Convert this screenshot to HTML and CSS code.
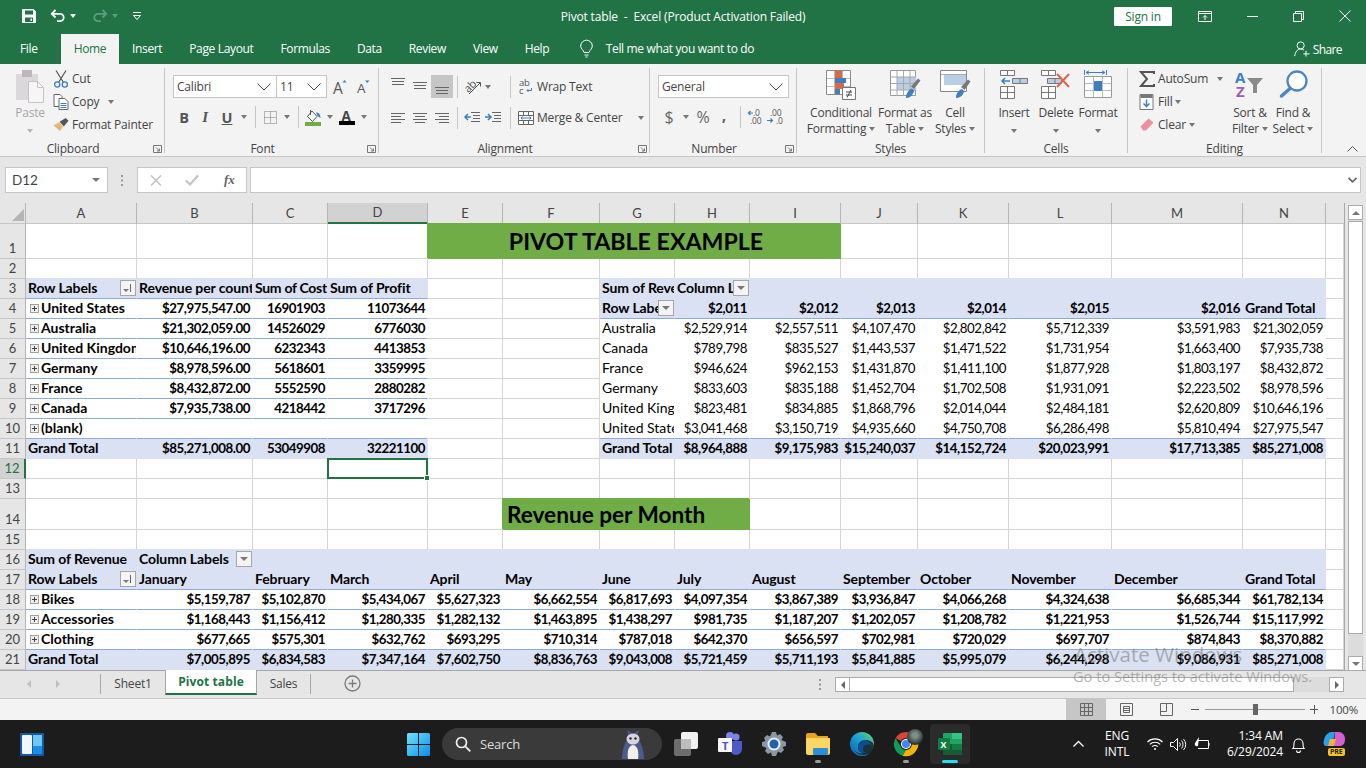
FILE: index.html
```html
<!DOCTYPE html>
<html lang="en">
<head>
  <meta charset="UTF-8">
  <title>Pivot table - Excel</title>
  <link rel="stylesheet" href="styles.css">
</head>
<body>

  <!-- Title bar -->
  <header class="titlebar">
    <div class="qat">
      <svg class="qat-save" width="16" height="16" viewBox="0 0 16 16"><path fill="#fff" fill-rule="evenodd" d="M1 1h11.5L15 3.5V15H1zM4 2.5v4h8v-4zM4 9.5V14h8V9.5zM9.5 10.5H11V13H9.5z"/></svg>
      <svg class="qat-undo" width="16" height="14" viewBox="0 0 16 14"><path fill="none" stroke="#fff" stroke-width="1.8" d="M5.5 1 1.8 4.8l3.7 3.7M2 4.8h8a3.6 3.6 0 0 1 0 7.4H7"/></svg>
      <span class="caret caret-white"></span>
      <svg class="qat-redo" width="16" height="14" viewBox="0 0 16 14"><path fill="none" stroke="#5f9c7d" stroke-width="1.8" d="M10.5 1l3.7 3.8-3.7 3.7M14 4.8H6a3.6 3.6 0 0 0 0 7.4h3"/></svg>
      <span class="caret caret-dim"></span>
      <svg class="qat-more" width="10" height="9" viewBox="0 0 10 9"><path fill="none" stroke="#fff" d="M1 .5h8M1.5 3.5l3.5 4 3.5-4z"/></svg>
    </div>
    <div class="doc-title">Pivot table&nbsp; -&nbsp; Excel (Product Activation Failed)</div>
    <div class="win-ctrls">
      <span class="signin">Sign in</span>
      <svg class="ctl-box" width="14" height="11" viewBox="0 0 14 11"><path fill="none" stroke="#fff" d="M.5.5h13v10H.5zM.5 2.5h13M7 9V4.5M5 6.5l2-2 2 2"/></svg>
      <svg class="ctl-min" width="11" height="1" viewBox="0 0 11 1"><path stroke="#fff" d="M0 .5h11"/></svg>
      <svg class="ctl-restore" width="11" height="11" viewBox="0 0 11 11"><path fill="none" stroke="#fff" d="M.5 2.5h8v8h-8zM2.5 2.5v-2h8v8h-2"/></svg>
      <svg class="ctl-close" width="12" height="12" viewBox="0 0 12 12"><path stroke="#fff" d="M.5.5l11 11M11.5.5l-11 11"/></svg>
    </div>
  </header>

  <!-- Ribbon tabs -->
  <nav class="tabs">
    <span class="tab tab-file">File</span>
    <span class="tab tab-active">Home</span>
    <span class="tab">Insert</span>
    <span class="tab">Page Layout</span>
    <span class="tab">Formulas</span>
    <span class="tab">Data</span>
    <span class="tab">Review</span>
    <span class="tab">View</span>
    <span class="tab">Help</span>
    <svg class="bulb" width="13" height="18" viewBox="0 0 13 18"><path fill="none" stroke="#fff" d="M4 12.5C3.500 10 .7 9 .7 6a5.800 5.800 0 0 1 11.600 0c0 3-2.800 4-3.300 6.500zM4.500 15h4M5.500 17h2"/></svg>
    <span class="tell">Tell me what you want to do</span>
    <span class="share">
      <svg width="16" height="16" viewBox="0 0 18 18"><path fill="none" stroke="#fff" stroke-width="1.100" d="M7.500 1a4 4 0 0 1 0 8 4 4 0 0 1 0-8zM.8 17c.5-4.500 3-8 6.700-8 1.500 0 2.800.5 3.800 1.300M13.500 11v6.500M10.500 14.500h7"/></svg>
      Share
    </span>
  </nav>

  <!-- Ribbon -->
  <section class="ribbon">

    <div class="group g-clipboard">
      <div class="group-main">
        <div class="bigbtn paste">
          <span class="bigicon">
            <svg width="30" height="33" viewBox="0 0 30 33"><rect x="1" y="4" width="22" height="26" fill="#dbd8db"/><rect x="7" y="0" width="10" height="7" fill="#bcb8bc"/><path fill="#f7f6f7" stroke="#c6c2c6" d="M13.500 11.500h9l6 6v15h-15z"/><path fill="none" stroke="#c6c2c6" d="M22.500 11.500v6h6"/></svg>
          </span>
          <span class="bigtext dim">Paste</span>
          <span class="bigtext"><span class="caret caret-dim2"></span></span>
        </div>
        <div class="stack">
          <div class="stack-row">
            <svg width="15" height="18" viewBox="0 0 15 18"><path fill="none" stroke="#555" stroke-width="1.200" d="M2.500.5l7.500 12M12.500.5L5 12.500"/><circle cx="3.700" cy="14.500" r="2.600" fill="none" stroke="#3c7fc0" stroke-width="1.300"/><circle cx="11.300" cy="14.500" r="2.600" fill="none" stroke="#3c7fc0" stroke-width="1.300"/></svg>
            <span>Cut</span>
          </div>
          <div class="stack-row">
            <svg width="15" height="16" viewBox="0 0 15 16"><path fill="#fff" stroke="#666" d="M.5.5h6l2 2v10h-8z"/><path fill="#fff" stroke="#666" d="M5.500 4.500h6l3 3v8h-9z"/><path stroke="#3c7fc0" d="M7 9.500h6M7 11.500h6M7 13.500h6"/></svg>
            <span>Copy</span><span class="caret caret-copy"></span>
          </div>
          <div class="stack-row">
            <svg width="17" height="15" viewBox="0 0 17 15"><path fill="#e3b873" d="M.5 8.500L6.500 5l4 5-3 4.500z"/><path fill="#555" d="M7 4.500L13.500.5l3 3-5 6z"/></svg>
            <span>Format Painter</span>
          </div>
        </div>
      </div>
      <div class="group-label"><span>Clipboard</span><svg class="launcher" width="9" height="8" viewBox="0 0 9 8"><path fill="none" stroke="#777" d="M.5 7.500V.5h8v7zM3 2.500l3.500 3.500M6.500 3.500V6H4"/></svg></div>
    </div>

    <div class="group g-font">
      <div class="group-main font-main">
        <div class="font-row1">
          <span class="combo combo-font"><span>Calibri</span><svg width="14" height="8" viewBox="0 0 14 8"><path fill="none" stroke="#444" d="M.5.5L7 7l6.500-6.500"/></svg></span>
          <span class="combo combo-size"><span>11</span><svg width="14" height="8" viewBox="0 0 14 8"><path fill="none" stroke="#444" d="M.5.5L7 7l6.500-6.500"/></svg></span>
          <svg class="grow" width="15" height="16" viewBox="0 0 15 16"><text x="0" y="15" class="ico-a">A</text><path fill="#3c7fc0" d="M9.500 3.500L11.500 1l2 2.500z"/></svg>
          <svg class="shrink" width="13" height="14" viewBox="0 0 13 14"><text x="0" y="13" class="ico-a2">A</text><path fill="#3c7fc0" d="M8 .5h4.500l-2.200 2.500z"/></svg>
        </div>
        <div class="font-row2">
          <span class="fmt fmt-b">B</span>
          <span class="fmt fmt-i">I</span>
          <span class="fmt fmt-u">U</span>
          <span class="caret"></span>
          <span class="vsep"></span>
          <svg width="13" height="13" viewBox="0 0 13 13"><path fill="none" stroke="#777" stroke-dasharray="1 1" d="M.5.500h12v12H.5zM6.500.500v12M.5 6.500h12"/></svg>
          <span class="caret"></span>
          <span class="vsep"></span>
          <svg width="16" height="17" viewBox="0 0 16 17"><path fill="#fff" stroke="#555" d="M2.500 7.500L7 2l5 5.500-4.500 5z"/><path fill="none" stroke="#555" d="M5.500 1v5"/><path fill="#3c7fc0" d="M11 3.500c3 0 4.500 2 4.500 5.500L12.500 7z"/><rect y="13" width="16" height="4" fill="#70ad47"/></svg>
          <span class="caret"></span>
          <svg width="16" height="16" viewBox="0 0 16 16"><text x="2.500" y="11.500" class="ico-color">A</text><rect y="12" width="16" height="4" fill="#000"/></svg>
          <span class="caret"></span>
        </div>
      </div>
      <div class="group-label"><span>Font</span><svg class="launcher" width="9" height="8" viewBox="0 0 9 8"><path fill="none" stroke="#777" d="M.5 7.500V.5h8v7zM3 2.500l3.500 3.500M6.500 3.500V6H4"/></svg></div>
    </div>

    <div class="group g-align">
      <div class="group-main font-main">
        <div class="align-row1">
          <span class="alb alb-top"><svg width="14" height="7" viewBox="0 0 14 7"><path stroke="#666" d="M0 .5h14M1 3.500h12M1 6.500h12"/></svg></span>
          <span class="alb alb-mid"><svg width="14" height="7" viewBox="0 0 14 7"><path stroke="#666" d="M0 .5h14M1 3.500h12M1 6.500h12"/></svg></span>
          <span class="alb alb-on"><svg width="14" height="7" viewBox="0 0 14 7"><path stroke="#666" d="M0 .5h14M1 3.500h12M1 6.500h12"/></svg></span>
          <span class="vsep"></span>
          <svg width="18" height="16" viewBox="0 0 18 16"><text x="1" y="12" class="ico-ab" transform="rotate(-45 6 8)">ab</text><path fill="none" stroke="#555" d="M6 15L17 4M13.500 3.500H17.500V7.500"/></svg>
          <span class="caret"></span>
          <span class="vsep vsep-far"></span>
          <svg width="14" height="16" viewBox="0 0 14 16"><text x="0" y="7" class="ico-wrap">ab</text><text x="0" y="15" class="ico-wrap">c</text><path fill="none" stroke="#3c7fc0" d="M12.500 9v2.500h-4.500M9.500 10l-1.500 1.500 1.500 1.500"/></svg>
          <span class="rb-text">Wrap Text</span>
        </div>
        <div class="align-row2">
          <span class="alb"><svg width="14" height="10" viewBox="0 0 14 10"><path stroke="#666" d="M0 .5h14M0 3.500h10M0 6.500h14M0 9.500h10"/></svg></span>
          <span class="alb"><svg width="14" height="10" viewBox="0 0 14 10"><path stroke="#666" d="M0 .5h14M2 3.500h10M0 6.500h14M2 9.500h10"/></svg></span>
          <span class="alb"><svg width="14" height="10" viewBox="0 0 14 10"><path stroke="#666" d="M0 .5h14M4 3.500h10M0 6.500h14M4 9.500h10"/></svg></span>
          <span class="vsep"></span>
          <svg width="16" height="11" viewBox="0 0 16 11"><path stroke="#666" d="M7 .5h9M9 3.500h7M9 6.500h7M7 9.500h9"/><path fill="none" stroke="#3c7fc0" stroke-width="1.500" d="M7 5H1M4 2L1 5l3 3"/></svg>
          <svg width="16" height="11" viewBox="0 0 16 11"><path stroke="#666" d="M7 .5h9M9 3.500h7M9 6.500h7M7 9.500h9"/><path fill="none" stroke="#3c7fc0" stroke-width="1.500" d="M0 5h6M3 2l3 3-3 3"/></svg>
          <span class="vsep vsep-near"></span>
          <svg width="16" height="14" viewBox="0 0 16 14"><path fill="#fff" stroke="#666" d="M.5.500h15v13H.5zM.5 4.500h15M.5 9.500h15M5.500.5v4M10.500.5v4M5.500 9.500v4M10.500 9.500v4"/><rect x="1" y="5" width="14" height="4" fill="#fff"/><path fill="none" stroke="#3c7fc0" d="M3 7h10M4.500 5.500L3 7l1.500 1.500M11.500 5.500L13 7l-1.500 1.500"/></svg>
          <span class="rb-text">Merge &amp; Center</span>
          <span class="caret caret-merge"></span>
        </div>
      </div>
      <div class="group-label"><span>Alignment</span><svg class="launcher" width="9" height="8" viewBox="0 0 9 8"><path fill="none" stroke="#777" d="M.5 7.500V.5h8v7zM3 2.500l3.500 3.500M6.500 3.500V6H4"/></svg></div>
    </div>

    <div class="group g-number">
      <div class="group-main font-main">
        <span class="combo combo-num"><span>General</span><svg width="14" height="8" viewBox="0 0 14 8"><path fill="none" stroke="#444" d="M.5.5L7 7l6.500-6.500"/></svg></span>
        <div class="num-row2">
          <span class="numsym">$</span>
          <span class="caret"></span>
          <span class="numsym">%</span>
          <span class="numsym numsym-comma">,</span>
          <span class="vsep"></span>
          <svg width="15" height="14" viewBox="0 0 15 14"><text x="5" y="6" class="ico-dec">.0</text><text x="2" y="13.500" class="ico-dec">.00</text><path fill="none" stroke="#3c7fc0" stroke-width="1.200" d="M5 3H.5M2.500 1L.5 3l2 2"/></svg>
          <svg width="16" height="14" viewBox="0 0 16 14"><text x="3" y="6" class="ico-dec">.00</text><text x="9" y="13.500" class="ico-dec">.0</text><path fill="none" stroke="#3c7fc0" stroke-width="1.200" d="M0 10.500h5M3.500 8.500l2 2-2 2"/></svg>
        </div>
      </div>
      <div class="group-label"><span>Number</span><svg class="launcher" width="9" height="8" viewBox="0 0 9 8"><path fill="none" stroke="#777" d="M.5 7.500V.5h8v7zM3 2.500l3.500 3.500M6.500 3.500V6H4"/></svg></div>
    </div>

    <div class="group g-styles">
      <div class="group-main">
        <div class="bigbtn b-cf">
          <span class="bigicon">
            <svg width="31" height="31" viewBox="0 0 31 31"><path fill="#fff" stroke="#888" d="M.5.5h24v24H.5z"/><path stroke="#bbb" d="M8.500 1v23M16.500 1v23M1 8.500h23M1 16.500h23"/><rect x="9" y="1" width="7" height="7" fill="#d9694a"/><rect x="9" y="8" width="11" height="5" fill="#3f7fbf"/><rect x="9" y="13" width="9" height="6" fill="#d9694a"/><rect x="9" y="19" width="5" height="5" fill="#3f7fbf"/><path fill="#fff" stroke="#777" d="M16.500 17.500h13v12h-13z"/><path stroke="#444" d="M20 22h6M20 25h6M25 20l-4 7.500"/></svg>
          </span>
          <span class="bigtext">Conditional</span>
          <span class="bigtext">Formatting<span class="caret caret-tx"></span></span>
        </div>
        <div class="bigbtn b-fat">
          <span class="bigicon">
            <svg width="31" height="29" viewBox="0 0 31 29"><path fill="#fff" stroke="#999" d="M.5.5h25v25H.5z"/><rect x="7" y="7" width="19" height="13" fill="#b9cde5"/><path stroke="#a8a8a8" d="M7 1v25M13.500 1v25M20 1v25M1 7h25M1 13.500h25M1 20h25"/><path fill="#777" d="M21 16.500L28 8.500l2.500 2-6.500 8.500z"/><path fill="#3f7fbf" d="M16 28c0-5 3-8 5.500-9.500l3 2c-1.500 3-3 7.500-8.500 7.500z"/></svg>
          </span>
          <span class="bigtext">Format as</span>
          <span class="bigtext">Table<span class="caret caret-tx"></span></span>
        </div>
        <div class="bigbtn b-cell">
          <span class="bigicon">
            <svg width="31" height="29" viewBox="0 0 31 29"><path fill="#fff" stroke="#888" d="M.5.5h26v21H.5z"/><rect x="4" y="4" width="22" height="11" fill="#b9cde5"/><path stroke="#aaa" d="M1 4.500h25"/><path fill="#777" d="M21 17L28 9.500l2.500 2-6 8.500z"/><path fill="#3f7fbf" d="M16 28c0-5 3-7.500 5.500-9l3 2c-1.500 3-3 7-8.500 7z"/></svg>
          </span>
          <span class="bigtext">Cell</span>
          <span class="bigtext">Styles<span class="caret caret-tx"></span></span>
        </div>
      </div>
      <div class="group-label group-label-plain"><span>Styles</span></div>
    </div>

    <div class="group g-cells">
      <div class="group-main">
        <div class="bigbtn b-cellbtn">
          <span class="bigicon">
            <svg width="28" height="29" viewBox="0 0 28 29"><path fill="#fff" stroke="#777" d="M.5.500h14v5H.5zM7.500.500v5M.5 16.500h14v12H.5zM.5 22.500h14M7.500 16.500v12"/><path fill="#b9cde5" stroke="#777" d="M12.500 8.500h15v5h-15zM20 8.500v5"/><path fill="none" stroke="#3c7fc0" stroke-width="1.500" d="M10 11H2M5 8l-3 3 3 3"/></svg>
          </span>
          <span class="bigtext">Insert</span>
          <span class="bigtext"><span class="caret"></span></span>
        </div>
        <div class="bigbtn b-cellbtn">
          <span class="bigicon">
            <svg width="30" height="29" viewBox="0 0 30 29"><path fill="#fff" stroke="#777" d="M.5.500h14v5H.5zM7.500.500v5M.5 16.500h14v12H.5zM.5 22.500h14M7.500 16.500v12"/><path fill="#b9cde5" stroke="#777" d="M6.500 8.500h14v5h-14zM14 8.500v5"/><path stroke="#d9694a" stroke-width="2" d="M16 4l12 13M28 4L16 17"/></svg>
          </span>
          <span class="bigtext">Delete</span>
          <span class="bigtext"><span class="caret"></span></span>
        </div>
        <div class="bigbtn b-cellbtn">
          <span class="bigicon">
            <svg width="29" height="30" viewBox="0 0 29 30"><path fill="none" stroke="#3c7fc0" d="M.5 0v5M22.500 0v5M2 2.500h19M5 .8L2 2.500l3 1.800M18 .8l3 1.700-3 1.800"/><path fill="#fff" stroke="#999" d="M.5 6.500h27v21h-27z"/><path stroke="#bbb" d="M9.500 7v20M18.500 7v20M1 13.500h26M1 20.500h26"/><rect x="10" y="11" width="8" height="10" fill="#3f7fbf"/></svg>
          </span>
          <span class="bigtext">Format</span>
          <span class="bigtext"><span class="caret"></span></span>
        </div>
      </div>
      <div class="group-label group-label-plain"><span>Cells</span></div>
    </div>

    <div class="group g-editing">
      <div class="group-main">
        <div class="stack stack-edit">
          <div class="stack-row">
            <svg width="16" height="16" viewBox="0 0 16 16"><path fill="none" stroke="#555" stroke-width="2" d="M15 3V1H2l6 7-6 7h13v-2"/></svg>
            <span>AutoSum</span><span class="caret caret-sum"></span>
          </div>
          <div class="stack-row">
            <svg width="15" height="16" viewBox="0 0 15 16"><path fill="#fff" stroke="#777" d="M.5.500h13v15H.5z"/><rect x="1" y="1" width="12" height="3" fill="#777"/><path fill="none" stroke="#3c7fc0" stroke-width="1.500" d="M7 5.500v7M4 9.500l3 3 3-3"/></svg>
            <span>Fill</span><span class="caret caret-tx"></span>
          </div>
          <div class="stack-row">
            <svg width="14" height="13" viewBox="0 0 14 13"><path fill="#ee8fa0" d="M.5 8.500L8.500.5 13.500 4.500 6 12.500H3z"/></svg>
            <span>Clear</span><span class="caret caret-tx"></span>
          </div>
        </div>
        <div class="bigbtn b-sort">
          <span class="bigicon">
            <svg width="30" height="28" viewBox="0 0 30 28"><text x="0" y="13" class="ico-az ico-az-a">A</text><text x="1" y="27" class="ico-az ico-az-z">Z</text><path fill="#8a8a8a" d="M12 8h16l-6 7v8h-4v-8z"/></svg>
          </span>
          <span class="bigtext">Sort &amp;</span>
          <span class="bigtext">Filter<span class="caret caret-tx"></span></span>
        </div>
        <div class="bigbtn b-find">
          <span class="bigicon">
            <svg width="29" height="28" viewBox="0 0 29 28"><circle cx="18" cy="11" r="9.500" fill="#fff" stroke="#4a86c2" stroke-width="2.300"/><path stroke="#4a86c2" stroke-width="3.500" stroke-linecap="round" d="M11 18.500L2.500 26"/></svg>
          </span>
          <span class="bigtext">Find &amp;</span>
          <span class="bigtext">Select<span class="caret caret-tx"></span></span>
        </div>
      </div>
      <div class="group-label group-label-plain"><span>Editing</span></div>
    </div>

    <svg class="collapse" width="11" height="6" viewBox="0 0 11 6"><path fill="none" stroke="#555" d="M.5 5.500l5-5 5 5"/></svg>
  </section>

  <!-- Formula bar -->
  <section class="formula">
    <div class="namebox"><span>D12</span><span class="caret caret-name"></span></div>
    <svg class="grip" width="2" height="11" viewBox="0 0 2 11"><path stroke="#999" stroke-width="2" stroke-dasharray="2 2.500" d="M1 0v11"/></svg>
    <div class="fx-box">
      <svg width="12" height="11" viewBox="0 0 12 11"><path stroke="#c4c4c4" stroke-width="1.600" d="M1 .5l10 10M11 .5l-10 10"/></svg>
      <svg width="14" height="11" viewBox="0 0 14 11"><path fill="none" stroke="#c4c4c4" stroke-width="2.200" d="M1 5.500l4 4 8-9"/></svg>
      <span class="fx">fx</span>
    </div>
    <div class="fx-input"><svg width="9" height="6" viewBox="0 0 9 6"><path fill="none" stroke="#666" stroke-width="1.700" d="M.5.8l4 4 4-4"/></svg></div>
  </section>

  <!-- Worksheet -->
  <section class="sheet-area">
    <div class="sheet-wrap">
      <table class="sheet">
        <colgroup>
          <col class="w-rh"><col class="w-a"><col class="w-b"><col class="w-c"><col class="w-d"><col class="w-e"><col class="w-f"><col class="w-g"><col class="w-h"><col class="w-i"><col class="w-j"><col class="w-k"><col class="w-l"><col class="w-m"><col class="w-n"><col class="w-o">
        </colgroup>
        <tr class="row-head">
          <th class="corner"><svg width="14" height="14" viewBox="0 0 14 14"><path fill="#b5b5b5" d="M13 1v12H1z"/></svg></th>
          <th>A</th><th>B</th><th>C</th><th class="col-on">D</th><th>E</th><th>F</th><th>G</th><th>H</th><th>I</th><th>J</th><th>K</th><th>L</th><th>M</th><th>N</th><th class="col-end"></th>
        </tr>
        <tr class="row-35">
          <th>1</th><td></td><td></td><td></td><td></td>
          <td colspan="5" class="banner banner-center">PIVOT TABLE EXAMPLE</td>
          <td></td><td></td><td></td><td></td><td></td><td></td>
        </tr>
        <tr>
          <th>2</th><td></td><td></td><td></td><td></td><td></td><td></td><td></td><td></td><td></td><td></td><td></td><td></td><td></td><td></td><td></td>
        </tr>
        <tr class="pv-top">
          <th>3</th>
          <td class="hl">Row Labels<span class="fbtn fbtn-sort"></span></td><td class="hl">Revenue per country</td><td class="hl tight">Sum of Cost</td><td class="hl">Sum of Profit</td>
          <td></td><td></td>
          <td class="h">Sum of Revenue</td><td class="h">Column Labels<span class="fbtn"></span></td><td class="h"></td><td class="h"></td><td class="h"></td><td class="h"></td><td class="h"></td><td class="h"></td>
          <td></td>
        </tr>
        <tr>
          <th>4</th>
          <td class="cl b"><span class="exp"></span>United States</td><td class="cl b r">$27,975,547.00</td><td class="cl b r">16901903</td><td class="cl b r">11073644</td>
          <td></td><td></td>
          <td class="hl">Row Labels<span class="fbtn"></span></td><td class="hl r">$2,011</td><td class="hl r">$2,012</td><td class="hl r">$2,013</td><td class="hl r">$2,014</td><td class="hl r">$2,015</td><td class="hl r">$2,016</td><td class="hl">Grand Total</td>
          <td></td>
        </tr>
        <tr>
          <th>5</th>
          <td class="cl b"><span class="exp"></span>Australia</td><td class="cl b r">$21,302,059.00</td><td class="cl b r">14526029</td><td class="cl b r">6776030</td>
          <td></td><td></td>
          <td class="c">Australia</td><td class="c r">$2,529,914</td><td class="c r">$2,557,511</td><td class="c r">$4,107,470</td><td class="c r">$2,802,842</td><td class="c r">$5,712,339</td><td class="c r">$3,591,983</td><td class="c r">$21,302,059</td>
          <td></td>
        </tr>
        <tr>
          <th>6</th>
          <td class="cl b"><span class="exp"></span>United Kingdom</td><td class="cl b r">$10,646,196.00</td><td class="cl b r">6232343</td><td class="cl b r">4413853</td>
          <td></td><td></td>
          <td class="c">Canada</td><td class="c r">$789,798</td><td class="c r">$835,527</td><td class="c r">$1,443,537</td><td class="c r">$1,471,522</td><td class="c r">$1,731,954</td><td class="c r">$1,663,400</td><td class="c r">$7,935,738</td>
          <td></td>
        </tr>
        <tr>
          <th>7</th>
          <td class="cl b"><span class="exp"></span>Germany</td><td class="cl b r">$8,978,596.00</td><td class="cl b r">5618601</td><td class="cl b r">3359995</td>
          <td></td><td></td>
          <td class="c">France</td><td class="c r">$946,624</td><td class="c r">$962,153</td><td class="c r">$1,431,870</td><td class="c r">$1,411,100</td><td class="c r">$1,877,928</td><td class="c r">$1,803,197</td><td class="c r">$8,432,872</td>
          <td></td>
        </tr>
        <tr>
          <th>8</th>
          <td class="cl b"><span class="exp"></span>France</td><td class="cl b r">$8,432,872.00</td><td class="cl b r">5552590</td><td class="cl b r">2880282</td>
          <td></td><td></td>
          <td class="c">Germany</td><td class="c r">$833,603</td><td class="c r">$835,188</td><td class="c r">$1,452,704</td><td class="c r">$1,702,508</td><td class="c r">$1,931,091</td><td class="c r">$2,223,502</td><td class="c r">$8,978,596</td>
          <td></td>
        </tr>
        <tr>
          <th>9</th>
          <td class="cl b"><span class="exp"></span>Canada</td><td class="cl b r">$7,935,738.00</td><td class="cl b r">4218442</td><td class="cl b r">3717296</td>
          <td></td><td></td>
          <td class="c">United Kingdom</td><td class="c r">$823,481</td><td class="c r">$834,885</td><td class="c r">$1,868,796</td><td class="c r">$2,014,044</td><td class="c r">$2,484,181</td><td class="c r">$2,620,809</td><td class="c r">$10,646,196</td>
          <td></td>
        </tr>
        <tr>
          <th>10</th>
          <td class="cl b"><span class="exp"></span>(blank)</td><td class="cl"></td><td class="cl"></td><td class="cl"></td>
          <td></td><td></td>
          <td class="cl">United States</td><td class="cl r">$3,041,468</td><td class="cl r">$3,150,719</td><td class="cl r">$4,935,660</td><td class="cl r">$4,750,708</td><td class="cl r">$6,286,498</td><td class="cl r">$5,810,494</td><td class="cl r">$27,975,547</td>
          <td></td>
        </tr>
        <tr>
          <th>11</th>
          <td class="h">Grand Total</td><td class="h r">$85,271,008.00</td><td class="h r">53049908</td><td class="h r">32221100</td>
          <td></td><td></td>
          <td class="h">Grand Total</td><td class="h r">$8,964,888</td><td class="h r">$9,175,983</td><td class="h r">$15,240,037</td><td class="h r">$14,152,724</td><td class="h r">$20,023,991</td><td class="h r">$17,713,385</td><td class="h r">$85,271,008</td>
          <td></td>
        </tr>
        <tr>
          <th class="row-on">12</th><td></td><td></td><td></td><td class="sel"></td><td></td><td></td><td></td><td></td><td></td><td></td><td></td><td></td><td></td><td></td><td></td>
        </tr>
        <tr>
          <th>13</th><td></td><td></td><td></td><td></td><td></td><td></td><td></td><td></td><td></td><td></td><td></td><td></td><td></td><td></td><td></td>
        </tr>
        <tr class="row-31">
          <th>14</th><td></td><td></td><td></td><td></td><td></td>
          <td colspan="3" class="banner banner-month">Revenue per Month</td>
          <td></td><td></td><td></td><td></td><td></td><td></td><td></td>
        </tr>
        <tr>
          <th>15</th><td></td><td></td><td></td><td></td><td></td><td></td><td></td><td></td><td></td><td></td><td></td><td></td><td></td><td></td><td></td>
        </tr>
        <tr class="pv-top">
          <th>16</th>
          <td class="h">Sum of Revenue</td><td class="h">Column Labels<span class="fbtn"></span></td><td class="h"></td><td class="h"></td><td class="h"></td><td class="h"></td><td class="h"></td><td class="h"></td><td class="h"></td><td class="h"></td><td class="h"></td><td class="h"></td><td class="h"></td><td class="h"></td>
          <td></td>
        </tr>
        <tr>
          <th>17</th>
          <td class="hl">Row Labels<span class="fbtn fbtn-sort"></span></td><td class="hl">January</td><td class="hl">February</td><td class="hl">March</td><td class="hl">April</td><td class="hl">May</td><td class="hl">June</td><td class="hl">July</td><td class="hl">August</td><td class="hl">September</td><td class="hl">October</td><td class="hl">November</td><td class="hl">December</td><td class="hl">Grand Total</td>
          <td></td>
        </tr>
        <tr>
          <th>18</th>
          <td class="cl b"><span class="exp"></span>Bikes</td><td class="cl b r">$5,159,787</td><td class="cl b r">$5,102,870</td><td class="cl b r">$5,434,067</td><td class="cl b r">$5,627,323</td><td class="cl b r">$6,662,554</td><td class="cl b r">$6,817,693</td><td class="cl b r">$4,097,354</td><td class="cl b r">$3,867,389</td><td class="cl b r">$3,936,847</td><td class="cl b r">$4,066,268</td><td class="cl b r">$4,324,638</td><td class="cl b r">$6,685,344</td><td class="cl b r">$61,782,134</td>
          <td></td>
        </tr>
        <tr>
          <th>19</th>
          <td class="cl b"><span class="exp"></span>Accessories</td><td class="cl b r">$1,168,443</td><td class="cl b r">$1,156,412</td><td class="cl b r">$1,280,335</td><td class="cl b r">$1,282,132</td><td class="cl b r">$1,463,895</td><td class="cl b r">$1,438,297</td><td class="cl b r">$981,735</td><td class="cl b r">$1,187,207</td><td class="cl b r">$1,202,057</td><td class="cl b r">$1,208,782</td><td class="cl b r">$1,221,953</td><td class="cl b r">$1,526,744</td><td class="cl b r">$15,117,992</td>
          <td></td>
        </tr>
        <tr>
          <th>20</th>
          <td class="cl b"><span class="exp"></span>Clothing</td><td class="cl b r">$677,665</td><td class="cl b r">$575,301</td><td class="cl b r">$632,762</td><td class="cl b r">$693,295</td><td class="cl b r">$710,314</td><td class="cl b r">$787,018</td><td class="cl b r">$642,370</td><td class="cl b r">$656,597</td><td class="cl b r">$702,981</td><td class="cl b r">$720,029</td><td class="cl b r">$697,707</td><td class="cl b r">$874,843</td><td class="cl b r">$8,370,882</td>
          <td></td>
        </tr>
        <tr>
          <th>21</th>
          <td class="h">Grand Total</td><td class="h r">$7,005,895</td><td class="h r">$6,834,583</td><td class="h r">$7,347,164</td><td class="h r">$7,602,750</td><td class="h r">$8,836,763</td><td class="h r">$9,043,008</td><td class="h r">$5,721,459</td><td class="h r">$5,711,193</td><td class="h r">$5,841,885</td><td class="h r">$5,995,079</td><td class="h r">$6,244,298</td><td class="h r">$9,086,931</td><td class="h r">$85,271,008</td>
          <td></td>
        </tr>
      </table>
    </div>
    <div class="vscroll">
      <span class="sb-btn"><span class="tri tri-up"></span></span>
      <span class="sb-track"><span class="sb-thumb"></span></span>
      <span class="sb-btn"><span class="tri tri-down"></span></span>
    </div>
  </section>

  <!-- Sheet tabs -->
  <section class="sheetbar">
    <div class="sheet-nav"><span class="tri tri-left"></span><span class="tri tri-right-dim"></span></div>
    <span class="stab stab-1">Sheet1</span>
    <span class="stab stab-on">Pivot table</span>
    <span class="stab stab-3">Sales</span>
    <svg class="addsheet" width="17" height="17" viewBox="0 0 17 17"><circle cx="8.500" cy="8.500" r="7.500" fill="none" stroke="#7b7b7b" stroke-width="1.300"/><path stroke="#7b7b7b" stroke-width="1.300" d="M8.500 4.500v8M4.500 8.500h8"/></svg>
    <svg class="grip grip-h" width="2" height="11" viewBox="0 0 2 11"><path stroke="#999" stroke-width="2" stroke-dasharray="2 2.500" d="M1 0v11"/></svg>
    <div class="hscroll">
      <span class="hs-btn"><span class="tri tri-left-dark"></span></span>
      <span class="hs-thumb"></span>
      <span class="hs-track"></span>
      <span class="hs-btn"><span class="tri tri-right"></span></span>
    </div>
  </section>

  <!-- Status bar -->
  <footer class="status">
    <span class="view view-on"><svg width="13" height="13" viewBox="0 0 13 13"><path fill="none" stroke="#666" d="M.5.5h12v12H.5zM4.500.5v12M8.500.5v12M.5 4.500h12M.5 8.500h12"/></svg></span>
    <span class="view"><svg width="13" height="13" viewBox="0 0 13 13"><path fill="none" stroke="#666" d="M.5.5h12v12H.5zM3.500 3.500h6v6h-6zM3.500 5.500h6M3.500 7.500h6"/></svg></span>
    <span class="view"><svg width="13" height="13" viewBox="0 0 13 13"><path fill="none" stroke="#666" d="M.5.5h12v12H.5zM.5 8.500h6v-8"/></svg></span>
    <span class="zoom-minus"></span>
    <span class="zoom-slider"><span class="zoom-thumb"></span></span>
    <span class="zoom-plus"></span>
    <span class="zoom-pct">100%</span>
  </footer>

  <!-- Windows taskbar -->
  <footer class="taskbar">
    <span class="tb-widgets">
      <svg width="24" height="23" viewBox="0 0 24 23"><rect width="24" height="23" rx="1" fill="#1458a6"/><rect x="2" y="2" width="10" height="19" rx="1" fill="#f2f6fb"/><rect x="13" y="2" width="9" height="11" fill="#6dc8f4"/><rect x="13" y="13" width="9" height="8" fill="#1a8fe6"/></svg>
    </span>
    <span class="tb-start">
      <svg width="23" height="23" viewBox="0 0 23 23"><defs><linearGradient id="winb" x1="0" y1="0" x2="1" y2="1"><stop offset="0" stop-color="#6fe4fb"/><stop offset="1" stop-color="#0a8ee8"/></linearGradient></defs><path fill="url(#winb)" d="M0 1.500A1.500 1.500 0 0 1 1.500 0H11v11H0zM12 0h9.500A1.500 1.500 0 0 1 23 1.500V11H12zM0 12h11v11H1.500A1.500 1.500 0 0 1 0 21.500zM12 12h11v9.500a1.500 1.500 0 0 1-1.500 1.500H12z"/></svg>
    </span>
    <div class="tb-search">
      <svg width="16" height="16" viewBox="0 0 16 16"><circle cx="6.500" cy="6.500" r="5" fill="none" stroke="#eee" stroke-width="1.700"/><path stroke="#eee" stroke-width="1.900" d="M10.300 10.300l5 5"/></svg>
      <span>Search</span>
      <svg class="owl" width="26" height="30" viewBox="0 0 26 30"><path fill="#4d5b8c" d="M2 30C2 19 6 12 9 8L7 1l6 4 6-4-2 7c3 4 7 11 7 22z"/><ellipse cx="13" cy="10" rx="6.500" ry="5.500" fill="#d6d4e0"/><circle cx="10.500" cy="9.500" r="1.200" fill="#223"/><circle cx="15.500" cy="9.500" r="1.200" fill="#223"/><path fill="#f2efe8" d="M8 30c-1-7 0-13 5-14 5 1 6 7 5 14z"/></svg>
    </div>
    <span class="tb-app">
      <svg width="24" height="24" viewBox="0 0 24 24"><rect y="7" width="17" height="17" rx="2" fill="#6d6d6d"/><rect x="7" width="17" height="17" rx="2" fill="#f2f2f2"/><rect x="7" y="7" width="10" height="10" fill="#bdbdbd"/></svg>
    </span>
    <span class="tb-app">
      <svg width="25" height="24" viewBox="0 0 25 24"><circle cx="18" cy="5" r="3.500" fill="#7b83eb"/><path fill="#5059c9" d="M10 9h14v8a6 6 0 0 1-12 0z"/><circle cx="12" cy="4" r="4" fill="#7b83eb"/><rect y="6" width="14" height="14" rx="1" fill="#f7f7fb"/><text x="7" y="17.500" class="ico-teams">T</text></svg>
    </span>
    <span class="tb-app">
      <svg width="24" height="24" viewBox="0 0 24 24"><path fill="#8a97a6" d="M10 0h4l1 3.500 3-1.500 3 3-1.500 3L24 10v4l-3.500 1 1.500 3-3 3-3-1.500L14 24h-4l-1-3.500L6 22l-3-3 1.500-3L0 14v-4l3.500-1L2 6l3-3 3 1.500z"/><circle cx="12" cy="12" r="6.500" fill="#e8eef4"/><circle cx="12" cy="12" r="4.500" fill="#1c62ad"/></svg>
    </span>
    <span class="tb-app">
      <svg width="24" height="22" viewBox="0 0 24 22"><path fill="#e7a51d" d="M0 2a2 2 0 0 1 2-2h7l3 3h10v6H0z"/><path fill="#fcd663" d="M0 5h24v15a2 2 0 0 1-2 2H2a2 2 0 0 1-2-2z"/><rect x="7" y="15" width="15" height="7" rx="1" fill="#2a8fd8"/></svg>
      <span class="tb-dot"></span>
    </span>
    <span class="tb-app">
      <svg width="24" height="24" viewBox="0 0 24 24"><defs><linearGradient id="edg" x1="0" y1="1" x2="1" y2="0"><stop offset="0" stop-color="#0c5aa8"/><stop offset=".55" stop-color="#1aa3d9"/><stop offset="1" stop-color="#6ad46b"/></linearGradient></defs><circle cx="12" cy="12" r="12" fill="url(#edg)"/><path fill="#1c1c1c" d="M24 15c0-5-4-7-8-7-5 0-8 3-8 7 0 3 2 6 6 6-3 1-8 0-10-3 1 2 5 5 9 5 6 0 11-3 11-8z" opacity=".85"/><path fill="#0e4d92" d="M8 15c0-3 3-6 7-6s6 2 7 5c-1-1-3-2-5-1-3 0-4 2-4 4 0 2 1 3 3 4-4 0-8-2-8-6z"/></svg>
    </span>
    <span class="tb-app tb-chrome">
      <svg width="24" height="24" viewBox="0 0 24 24"><path fill="#db4437" d="M12 0a12 12 0 0 1 10.400 6H12a6 6 0 0 0-5.200 3L1.600 6A12 12 0 0 1 12 0z"/><path fill="#0f9d58" d="M1.600 6l5.200 9a6 6 0 0 0 5.200 3l-3.400 5.700A12 12 0 0 1 1.600 6z"/><path fill="#f4b400" d="M22.400 6a12 12 0 0 1-13.800 17.700L12 18a6 6 0 0 0 5.200-9L12 6z"/><circle cx="12" cy="12" r="5" fill="#fff"/><circle cx="12" cy="12" r="4" fill="#4285f4"/></svg>
      <span class="avatar"></span>
      <span class="tb-dot"></span>
    </span>
    <span class="tb-app tb-on">
      <svg width="24" height="24" viewBox="0 0 24 24"><rect x="5" y="1" width="19" height="22" rx="1" fill="#21a366"/><rect x="14" y="1" width="10" height="6" fill="#33c481"/><rect x="5" y="12" width="9" height="11" fill="#185c37"/><rect x="14" y="12" width="10" height="6" fill="#107c41"/><rect x="14" y="18" width="10" height="5" fill="#185c37"/><rect y="6" width="12" height="12" rx="1" fill="#107c41"/><text x="2.500" y="15.500" class="ico-xl">X</text></svg>
      <span class="tb-ind"></span>
    </span>

    <div class="tray">
      <svg width="11" height="6" viewBox="0 0 11 6"><path fill="none" stroke="#fff" stroke-width="1.300" d="M.5 5.500l5-5 5 5"/></svg>
      <div class="tray-lang"><span>ENG</span><span>INTL</span></div>
      <svg width="16" height="12" viewBox="0 0 16 12"><path fill="none" stroke="#fff" stroke-width="1.100" d="M.5 4a10.500 10.500 0 0 1 15 0M2.800 6.400a7.200 7.200 0 0 1 10.400 0M5.200 8.700a3.800 3.800 0 0 1 5.600 0"/><circle cx="8" cy="11" r="1" fill="#fff"/></svg>
      <svg width="16" height="13" viewBox="0 0 16 13"><path fill="none" stroke="#fff" d="M.5 4.500h3l4-4v12l-4-4h-3zM9.500 4.500a3 3 0 0 1 0 4M11.500 2.500a6 6 0 0 1 0 8M13.500 1a8 8 0 0 1 0 11"/></svg>
      <svg width="17" height="14" viewBox="0 0 17 14"><path fill="none" stroke="#fff" d="M4 3.500h10.500v8H4M15 6v3"/><path fill="#fff" d="M5 0L1 6c-1 2 1 4 3 3zM.5 13l7-5"/></svg>
      <div class="clock"><span>1:34 AM</span><span>6/29/2024</span></div>
      <svg width="15" height="15" viewBox="0 0 15 15"><path fill="none" stroke="#fff" stroke-width="1.100" d="M2 11.500c1-1 1-2 1-5a4.500 4.500 0 0 1 9 0c0 3 0 4 1 5zM5.500 13.500a2 2 0 0 0 4 0"/></svg>
      <span class="copilot">
        <svg width="24" height="22" viewBox="0 0 24 22"><path fill="#2aa0e8" d="M3 5c1-3 4-5 7-5h3l-3 14H4C1 14 1 9 3 5z"/><path fill="#d65fd0" d="M13 0h4c3 0 6 3 6 7 0 3-1 7-5 7h-6z"/><path fill="#f0b43c" d="M8 7h6l-2 7H6z"/></svg>
        <span class="pre">PRE</span>
      </span>
    </div>
  </footer>

  <!-- Activation watermark, sits over the sheet -->
  <div class="watermark">
    <div class="wm-big">Activate Windows</div>
    <div class="wm-small">Go to Settings to activate Windows.</div>
  </div>

</body>
</html>
```

FILE: styles.css
```css
/* Reset & base */
*, *::before, *::after {
  box-sizing: border-box;
}
html, body {
  margin: 0;
  padding: 0;
}
body {
  width: 1366px;
  height: 768px;
  overflow: hidden;
  position: relative;
  display: flex;
  flex-direction: column;
  font-family: "Open Sans", "Noto Sans", sans-serif;
  font-size: 12px;
  letter-spacing: -0.2px;
  color: #444;
  background: #e6e6e6;
}
svg {
  display: block;
  flex: none;
  overflow: visible;
}

/* Carets */
.caret {
  display: inline-block;
  width: 0;
  height: 0;
  border-left: 3.5px solid transparent;
  border-right: 3.5px solid transparent;
  border-top: 4px solid #777;
}
.caret-white { border-top-color: #fff; }
.caret-dim { border-top-color: #5f9c7d; }
.caret-dim2 { border-top-color: #b5b5b5; }
.caret-copy { margin-left: 9px; }
.caret-tx { margin-left: 3px; vertical-align: 2px; }
.caret-sum { margin-left: 9px; }
.caret-merge { margin-left: 9px; justify-self: start; }

/* Title bar */
.titlebar {
  height: 32px;
  background: #217346;
  display: grid;
  grid-template-columns: 1fr auto 1fr;
  align-items: center;
  color: #fff;
}
.qat {
  display: flex;
  align-items: center;
  padding-left: 21px;
}
.qat-undo { margin-left: 13px; }
.qat .caret-white { margin-left: 4px; }
.qat-redo { margin-left: 16px; }
.qat .caret-dim { margin-left: 4px; }
.qat-more { margin-left: 14px; }
.doc-title {
  white-space: pre;
  letter-spacing: -0.16px;
}
.win-ctrls {
  display: flex;
  align-items: center;
  justify-content: flex-end;
}
.signin {
  width: 58px;
  height: 19px;
  line-height: 19px;
  text-align: center;
  background: #fff;
  color: #217346;
  border-radius: 1px;
  margin-right: 26px;
}
.ctl-box { margin-right: 35px; }
.ctl-min { margin-right: 35px; }
.ctl-restore { margin-right: 35px; }
.ctl-close { margin-right: 15px; }

/* Ribbon tabs */
.tabs {
  height: 32px;
  background: #217346;
  display: flex;
  align-items: flex-end;
  color: #fff;
  padding-left: 20px;
  letter-spacing: -0.35px;
}
.tab {
  height: 30px;
  line-height: 29px;
  padding: 0 13.5px;
}
.tab-file { padding: 0 10px 0 0; width: 41px; }
.tab-active {
  width: 58px;
  padding: 0;
  text-align: center;
  background: #f3f3f3;
  color: #217346;
}
.tab-active + .tab { padding-left: 13px; }
.bulb {
  margin: 0 13px 6px 17px;
}
.tell { line-height: 29px; height: 30px; }
.share {
  margin-left: auto;
  margin-right: 24px;
  height: 30px;
  display: flex;
  align-items: center;
  gap: 3px;
  letter-spacing: -0.6px;
}

/* Ribbon */
.ribbon {
  height: 93px;
  background: #f3f3f3;
  border-bottom: 1px solid #c6c6c6;
  display: flex;
  align-items: flex-start;
  position: relative;
}
.group {
  flex: none;
  height: 85px;
  margin-top: 4px;
  border-right: 1px solid #c6c6c6;
}
.g-clipboard { width: 165px; }
.g-font { width: 214px; }
.g-align { width: 271px; }
.g-number { width: 147px; }
.g-styles { width: 188px; }
.g-cells { width: 143px; }
.g-editing { width: 194px; }

.group-main {
  display: flex;
  height: 72px;
}
.group-label {
  height: 16px;
  line-height: 16px;
  margin-top: 1px;
  display: flex;
  align-items: center;
  text-align: center;
}
.group-label span {
  flex: 1;
}
.launcher {
  margin: 0 2px 0 7px;
}
.group-label-plain span {
  padding: 0;
}

/* Large ribbon buttons */
.bigbtn {
  flex: none;
  display: flex;
  flex-direction: column;
  align-items: center;
  padding-top: 2px;
  white-space: nowrap;
}
.bigicon {
  height: 35px;
  display: flex;
  align-items: flex-start;
}
.bigtext {
  height: 16px;
  line-height: 16px;
}
.dim { color: #a6a6a6; }
.paste { width: 40px; margin-left: 10px; }
.g-styles .group-main { padding-left: 7px; }
.b-cf { width: 74px; }
.b-fat { width: 54px; }
.b-cell { width: 46px; }
.g-cells .group-main { padding-left: 8px; }
.b-cellbtn { width: 42px; }
.b-sort { width: 42px; }
.b-find { width: 44px; }

/* Small stacked commands */
.stack {
  display: flex;
  flex-direction: column;
  margin-top: -1px;
}
.stack-row {
  height: 23px;
  display: flex;
  align-items: center;
  white-space: nowrap;
}
.stack-row svg {
  width: 22px;
  padding: 0 3px;
}
.stack-edit {
  width: 93px;
  margin-left: 8px;
  flex: none;
}

/* Font / alignment / number rows */
.font-main {
  flex-direction: column;
  padding: 7px 0 0 8px;
}
.combo {
  height: 23px;
  background: #fff;
  border: 1px solid #c6c6c6;
  display: flex;
  align-items: center;
  justify-content: space-between;
  padding: 0 5px 0 3px;
  flex: none;
  font-size: 12px;
}
.combo-font { width: 104px; }
.combo-size { width: 51px; margin-left: -1px; }
.combo-num { width: 131px; }
.font-row1 {
  display: flex;
  align-items: center;
  height: 23px;
}
.grow { margin-left: 6px; }
.shrink { margin-left: 9px; }
.ico-a { font: 15.500px "Open Sans", sans-serif; fill: #555; }
.ico-a2 { font: 13.500px "Open Sans", sans-serif; fill: #555; }
.ico-color { font: bold 13.500px "Open Sans", sans-serif; fill: #444; }
.ico-ab { font: 11px "Open Sans", sans-serif; fill: #555; }
.ico-wrap { font: 9.500px "Open Sans", sans-serif; fill: #555; }
.ico-dec { font: 8.500px "Open Sans", sans-serif; fill: #555; }
.ico-az { font: bold 15px "Open Sans", sans-serif; }
.ico-az-a { fill: #3c7fc0; }
.ico-az-z { fill: #9b5fb5; }
.ico-teams { font: bold 11px "Open Sans", sans-serif; fill: #4b53bc; text-anchor: middle; }
.ico-xl { font: bold 9px "Open Sans", sans-serif; fill: #fff; }

.font-row2,
.align-row2,
.num-row2 {
  display: grid;
  align-items: center;
  justify-items: center;
  height: 22px;
  margin-top: 8px;
}
.font-row2 {
  grid-template-columns: 20px 22px 22px 12px 10px 20px 14px 8px 22px 12px 22px 12px;
  margin-left: 1px;
}
.fmt {
  font-size: 14.500px;
  font-weight: 700;
  color: #555;
}
.fmt-i { font-style: italic; font-family: "Liberation Serif", serif; font-size: 15px; }
.fmt-u { text-decoration: underline; }
.vsep {
  width: 1px;
  height: 22px;
  background: #c6c6c6;
}
.align-row1 {
  display: grid;
  grid-template-columns: 22px 22px 22px 9px 20px 12px 24px 16px auto;
  align-items: center;
  justify-items: center;
  height: 23px;
}
.align-row2 {
  grid-template-columns: 22px 22px 22px 9px 20px 22px 14px 16px auto 20px;
}
.alb {
  width: 22px;
  height: 23px;
  display: flex;
  align-items: center;
  justify-content: center;
}
.alb-on {
  background: #c6c6c6;
  align-items: flex-end;
  padding-bottom: 4px;
}
.alb-top { align-items: flex-start; padding-top: 3px; }
.alb-mid { padding-bottom: 3px; }
.vsep-far { justify-self: start; margin-left: 16px; }
.vsep-near { justify-self: start; margin-left: 6px; }
.rb-text {
  justify-self: start;
  padding-left: 3px;
  white-space: nowrap;
}
.num-row2 {
  grid-template-columns: 22px 11px 24px 18px 14px 16px 24px;
}
.numsym {
  font-size: 16px;
  color: #666;
}
.numsym-comma { font-weight: 700; margin-top: -5px; }

.collapse {
  position: absolute;
  left: 1347px;
  top: 82px;
}

/* Formula bar */
.formula {
  height: 46px;
  display: flex;
  align-items: flex-start;
  padding: 10px 5px 0 5px;
}
.namebox {
  width: 103px;
  height: 26px;
  background: #fff;
  border: 1px solid #c6c6c6;
  display: flex;
  align-items: center;
  justify-content: space-between;
  padding: 0 7px 0 6px;
  font-family: Lato, sans-serif;
  font-size: 13.5px;
  letter-spacing: 0;
}
.caret-name {
  border-left-width: 4px;
  border-right-width: 4px;
}
.grip {
  margin: 8px 14px 0 13px;
}
.fx-box {
  width: 110px;
  height: 26px;
  background: #fff;
  border: 1px solid #c6c6c6;
  display: flex;
  align-items: center;
  padding-left: 12px;
  gap: 23px;
}
.fx {
  font: italic 700 13px "Liberation Serif", serif;
  color: #666;
  margin-left: 2px;
}
.fx-input {
  flex: 1;
  height: 26px;
  margin-left: 3px;
  background: #fff;
  border: 1px solid #c6c6c6;
  display: flex;
  align-items: center;
  justify-content: flex-end;
  padding-right: 3px;
}

/* Worksheet */
.sheet-area {
  height: 468px;
  display: flex;
  border-bottom: 1px solid #a6a6a6;
  background: #e6e6e6;
}
.sheet-wrap {
  width: 1345px;
  height: 467px;
  overflow: hidden;
  background: #fff;
  border-right: 1px solid #a6a6a6;
}
.sheet {
  table-layout: fixed;
  width: 1344px;
  border-collapse: separate;
  border-spacing: 0;
  font-family: Lato, "Liberation Sans", sans-serif;
  font-size: 14px;
  font-variant-ligatures: none;
  letter-spacing: 0;
  color: #000;
}
.w-rh { width: 26px; }
.w-a { width: 111px; }
.w-b { width: 116px; }
.w-c { width: 75px; }
.w-d { width: 100px; }
.w-e { width: 75px; }
.w-f { width: 97px; }
.w-g { width: 75px; }
.w-h { width: 75px; }
.w-i { width: 91px; }
.w-j { width: 77px; }
.w-k { width: 91px; }
.w-l { width: 103px; }
.w-m { width: 131px; }
.w-n { width: 83px; }
.w-o { width: 18px; }

.sheet tr { height: 20px; }
.sheet tr.row-35 { height: 35px; }
.sheet tr.row-31 { height: 31px; }

.sheet td {
  padding: 0 2px 1px;
  height: inherit;
  line-height: 18px;
  white-space: nowrap;
  overflow: hidden;
  vertical-align: bottom;
  position: relative;
  border-right: 1px solid #d4d4d4;
  border-bottom: 1px solid #d4d4d4;
}
.sheet th {
  padding: 0;
  font-weight: 400;
  font-size: 13px;
  color: #444;
  background: #e6e6e6;
  border-right: 1px solid #b5b5b5;
  border-bottom: 1px solid #c6c6c6;
  vertical-align: bottom;
  line-height: 19px;
  text-align: center;
}
.row-head th {
  vertical-align: middle;
}
.corner svg { margin: 3px 0 0 11px; }
.col-on {
  background: #d2d2d2 !important;
  border-bottom: 2px solid #217346 !important;
}
.col-end { border-right: none !important; }
.row-on {
  background: #d2d2d2 !important;
  color: #217346 !important;
  border-right: 2px solid #217346 !important;
}
.sheet td.sel {
  overflow: visible;
}
.sel::before {
  content: "";
  position: absolute;
  top: -1px;
  left: -1px;
  right: -1px;
  bottom: -1px;
  border: 2px solid #217346;
  z-index: 2;
}
.sel::after {
  content: "";
  position: absolute;
  right: -3px;
  bottom: -3px;
  width: 6px;
  height: 6px;
  background: #217346;
  border: 1px solid #fff;
  z-index: 3;
}

/* Pivot cells */
.sheet td.h,
.sheet td.hl {
  background: #d9e1f2;
  font-weight: 700;
  letter-spacing: -0.1px;
  border-right-color: transparent;
  border-bottom-color: transparent;
}
.sheet td.hl { border-bottom-color: #8ea9db; }
.sheet td.tight { letter-spacing: -0.3px; }
.pv-top td.h,
.pv-top td.hl {
  box-shadow: 0 -1px 0 #d9e1f2;
}
.sheet td.c {
  border-right-color: transparent;
  border-bottom-color: transparent;
}
.sheet td.cl {
  border-right-color: transparent;
  border-bottom-color: #8ea9db;
}
.sheet td.b { font-weight: 700; }
.sheet td.r {
  padding-bottom: 0;
  text-align: right;
  line-height: 19px;
  font-size: 13.3px;
  letter-spacing: -0.45px;
}

.sheet td.banner {
  background: #70ad47;
  box-shadow: -1px -1px 0 #70ad47;
  font-size: 22.600px;
  font-weight: 700;
  line-height: 30px;
  padding: 0 0 0 4px;
  border-color: transparent;
}
.sheet td.banner-center {
  text-align: center;
  font-size: 23.200px;
  padding-bottom: 2px;
}
.sheet td.banner-month {
  line-height: 28px;
}

.exp {
  display: inline-block;
  width: 9px;
  height: 9px;
  margin: 0 2px 0 2px;
  vertical-align: 0;
  border: 1px solid #a0a0a0;
  background: linear-gradient(#444, #444) center / 5px 1px no-repeat,
              linear-gradient(#444, #444) center / 1px 5px no-repeat,
              #eee;
}
.fbtn {
  position: absolute;
  right: 0;
  top: 1px;
  width: 16px;
  height: 16px;
  background: #f4f4f4;
  border: 1px solid #a6a6a6;
}
.fbtn::after {
  content: "";
  position: absolute;
  left: 3px;
  top: 5px;
  border-left: 4px solid transparent;
  border-right: 4px solid transparent;
  border-top: 4px solid #777;
}
.fbtn-sort::after {
  left: 2px;
  top: 8px;
  border-left-width: 3px;
  border-right-width: 3px;
  border-top-width: 3px;
}
.fbtn-sort::before {
  content: "";
  position: absolute;
  left: 9px;
  top: 3px;
  width: 1px;
  height: 8px;
  background: #666;
}

/* Scrollbars */
.tri {
  display: block;
  width: 0;
  height: 0;
}
.tri-up {
  border-left: 4px solid transparent;
  border-right: 4px solid transparent;
  border-bottom: 4px solid #777;
}
.tri-down {
  border-left: 4px solid transparent;
  border-right: 4px solid transparent;
  border-top: 4px solid #777;
}
.tri-left,
.tri-right-dim,
.tri-left-dark {
  border-top: 4px solid transparent;
  border-bottom: 4px solid transparent;
  border-right: 4px solid #c0c0c0;
}
.tri-left-dark { border-right-color: #666; }
.tri-right-dim {
  border-right: none;
  border-left: 4px solid #c0c0c0;
}
.tri-right {
  border-top: 4px solid transparent;
  border-bottom: 4px solid transparent;
  border-left: 4px solid #666;
}
.vscroll {
  width: 21px;
  padding: 2px 0 0 3px;
  display: flex;
  flex-direction: column;
}
.sb-btn {
  width: 15px;
  height: 15px;
  flex: none;
  background: #fff;
  border: 1px solid #ababab;
  display: flex;
  align-items: center;
  justify-content: center;
}
.sb-track {
  flex: none;
  width: 15px;
  height: 436px;
  padding-top: 1px;
  background: #dcdcdc;
}
.sb-thumb {
  display: block;
  width: 15px;
  height: 413px;
  background: #fff;
  border: 1px solid #ababab;
}

/* Sheet tabs */
.sheetbar {
  height: 28px;
  display: flex;
  align-items: flex-start;
  border-bottom: 1px solid #c6c6c6;
  background: #e6e6e6;
}
.sheet-nav {
  width: 101px;
  height: 20px;
  margin-top: 3px;
  border-right: 1px solid #a6a6a6;
  display: flex;
  align-items: center;
  gap: 25px;
  padding-left: 27px;
}
.stab {
  height: 20px;
  margin-top: 3px;
  line-height: 20px;
  text-align: center;
  color: #444;
}
.stab-1 { width: 64px; }
.stab-on {
  width: 92px;
  height: 25px;
  margin-top: -1px;
  line-height: 24px;
  background: #fff;
  color: #217346;
  font-weight: 700;
  letter-spacing: 0.1px;
  border-left: 1px solid #a6a6a6;
  border-right: 1px solid #a6a6a6;
  border-bottom: 2px solid #217346;
}
.stab-3 {
  width: 54px;
  border-right: 1px solid #a6a6a6;
}
.addsheet {
  margin: 4px 0 0 33px;
}
.grip-h {
  margin: 8px 14px 0 458px;
}
.hscroll {
  width: 509px;
  height: 15px;
  margin-top: 6px;
  display: flex;
}
.hs-btn {
  width: 15px;
  height: 15px;
  flex: none;
  background: #fff;
  border: 1px solid #ababab;
  display: flex;
  align-items: center;
  justify-content: center;
}
.hs-thumb {
  width: 444px;
  background: #fff;
  border: 1px solid #ababab;
  border-left: none;
}
.hs-track {
  flex: 1;
  background: #dcdcdc;
}

/* Status bar */
.status {
  height: 21px;
  background: #f3f3f3;
  display: flex;
  justify-content: flex-end;
  align-items: center;
  padding-right: 8px;
}
.view {
  width: 40px;
  height: 21px;
  display: flex;
  align-items: center;
  justify-content: center;
}
.view-on { background: #c6c6c6; }
.zoom-minus,
.zoom-plus {
  height: 1px;
  background: #555;
  width: 8px;
  position: relative;
}
.zoom-minus { margin: 0 6px 0 5px; }
.zoom-plus { margin: 0 0 0 5px; }
.zoom-plus::after {
  content: "";
  position: absolute;
  left: 3.5px;
  top: -4px;
  width: 1px;
  height: 9px;
  background: #555;
}
.zoom-slider {
  width: 100px;
  height: 1px;
  background: #999;
  position: relative;
}
.zoom-thumb {
  position: absolute;
  left: 48px;
  top: -5px;
  width: 5px;
  height: 11px;
  background: #666;
}
.zoom-pct {
  width: 40px;
  text-align: right;
  color: #444;
  font-size: 11.500px;
}

/* Taskbar */
.taskbar {
  height: 48px;
  background: #1c1c1c;
  display: flex;
  align-items: center;
  color: #fff;
  position: relative;
}
.tb-widgets {
  margin-left: 20px;
  width: 44px;
}
.tb-start {
  margin-left: 332px;
  width: 44px;
  display: flex;
  justify-content: center;
}
.tb-search {
  width: 220px;
  height: 32px;
  margin: 0 2px;
  border-radius: 16px;
  background: #3a3a3a;
  display: flex;
  align-items: center;
  padding-left: 13px;
  color: #ddd;
  font-size: 13px;
  position: relative;
}
.tb-search span { margin-left: 9px; }
.owl {
  position: absolute;
  right: 16px;
  top: 1px;
}
.tb-app {
  width: 44px;
  height: 40px;
  flex: none;
  display: flex;
  align-items: center;
  justify-content: center;
  position: relative;
}
.tb-on {
  width: 40px;
  margin: 0 2px;
  background: #2b2b2b;
  border-radius: 4px;
}
.tb-ind {
  position: absolute;
  left: 12px;
  bottom: 1px;
  width: 16px;
  height: 3px;
  border-radius: 2px;
  background: #1fe0f0;
}
.tb-dot {
  position: absolute;
  left: 19px;
  bottom: 1px;
  width: 6px;
  height: 3px;
  border-radius: 2px;
  background: #9a9a9a;
}
.avatar {
  position: absolute;
  left: 23px;
  top: 5px;
  width: 16px;
  height: 16px;
  border-radius: 50%;
  background: radial-gradient(circle at 50% 40%, #7d8f88 20%, #26352f 70%);
}
.tray {
  position: absolute;
  left: 1066px;
  top: 0;
  height: 48px;
  display: grid;
  grid-template-columns: 24px 54px 22px 24px 24px 69px 30px 42px;
  align-items: center;
  justify-items: center;
  font-size: 12px;
  letter-spacing: -0.1px;
}
.tray-lang,
.clock {
  display: flex;
  flex-direction: column;
  line-height: 16px;
}
.tray-lang { align-items: center; }
.clock {
  justify-self: end;
  align-items: flex-end;
}
.copilot {
  position: relative;
  width: 24px;
  height: 24px;
}
.pre {
  position: absolute;
  left: 6px;
  bottom: 0;
  background: #f5c518;
  color: #222;
  font-size: 7px;
  font-weight: 700;
  line-height: 8px;
  padding: 0 2px;
  border-radius: 2px;
}

/* Activation watermark */
.watermark {
  position: absolute;
  left: 1073px;
  top: 641px;
  color: rgba(110, 110, 110, 0.5);
  pointer-events: none;
  white-space: nowrap;
  letter-spacing: 0;
}
.wm-big {
  font-size: 20.500px;
  line-height: 27px;
  margin-left: 1px;
}
.wm-small {
  font-size: 14.600px;
  line-height: 17px;
}
```
